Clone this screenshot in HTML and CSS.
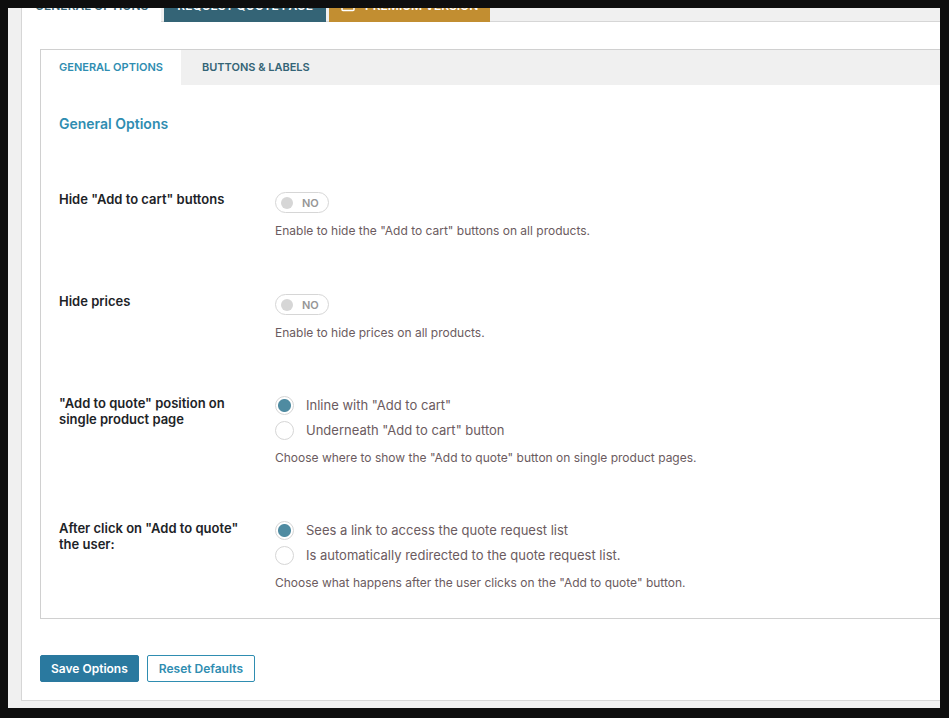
FILE: index.html
```html
<!DOCTYPE html>
<html lang="en">
<head>
    <meta charset="UTF-8">
    <meta name="viewport" content="width=device-width, initial-scale=1.0">
    <title>General Options</title>
    <link rel="stylesheet" href="styles.css">
</head>
<body>

<div class="screen">
    <div class="panel">

        <nav class="main-tabs">
            <a href="#general" class="main-tab active">General Options</a>
            <a href="#request" class="main-tab">Request Quote Page</a>
            <a href="#premium" class="main-tab premium">
                <svg class="tab-icon" width="14" height="12" viewBox="0 0 14 12" fill="none" stroke="#fff" stroke-width="1.5">
                    <path d="M1 1l3.5 3.5L7 1l2.5 3.5L13 1v8.5a1 1 0 0 1-1 1H2a1 1 0 0 1-1-1z"/>
                </svg>
                Premium Version
            </a>
        </nav>

        <form class="panel-content">
            <div class="options-box">
                <nav class="sub-tabs">
                    <a href="#general-options" class="sub-tab active">General Options</a>
                    <a href="#buttons-labels" class="sub-tab">Buttons &amp; Labels</a>
                </nav>

                <div class="options">
                    <h2>General Options</h2>

                    <div class="option-row">
                        <label class="option-label" for="hide-cart">Hide "Add to cart" buttons</label>
                        <div class="option-field">
                            <label class="switch">
                                <input id="hide-cart" type="checkbox">
                                <span>NO</span>
                            </label>
                            <p class="description">Enable to hide the "Add to cart" buttons on all products.</p>
                        </div>
                    </div>

                    <div class="option-row">
                        <label class="option-label" for="hide-prices">Hide prices</label>
                        <div class="option-field">
                            <label class="switch">
                                <input id="hide-prices" type="checkbox">
                                <span>NO</span>
                            </label>
                            <p class="description">Enable to hide prices on all products.</p>
                        </div>
                    </div>

                    <div class="option-row" role="radiogroup" aria-labelledby="position-label">
                        <div class="option-label" id="position-label">"Add to quote" position on single product page</div>
                        <div class="option-field">
                            <label class="radio">
                                <input type="radio" name="position" value="inline" checked>
                                Inline with "Add to cart"
                            </label>
                            <label class="radio">
                                <input type="radio" name="position" value="under">
                                Underneath "Add to cart" button
                            </label>
                            <p class="description radio-description">Choose where to show the "Add to quote" button on single product pages.</p>
                        </div>
                    </div>

                    <div class="option-row" role="radiogroup" aria-labelledby="after-label">
                        <div class="option-label" id="after-label">After click on "Add to quote" the user:</div>
                        <div class="option-field">
                            <label class="radio">
                                <input type="radio" name="after" value="link" checked>
                                Sees a link to access the quote request list
                            </label>
                            <label class="radio">
                                <input type="radio" name="after" value="redirect">
                                Is automatically redirected to the quote request list.
                            </label>
                            <p class="description radio-description">Choose what happens after the user clicks on the "Add to quote" button.</p>
                        </div>
                    </div>
                </div>
            </div>

            <div class="buttons">
                <button type="submit" class="button primary">Save Options</button>
                <button type="reset" class="button">Reset Defaults</button>
            </div>
        </form>

    </div>
</div>

</body>
</html>
```
FILE: styles.css
```css
* {
    box-sizing: border-box;
}

body {
    margin: 0;
    padding: 8px 9px 10px 8px;
    background-color: #0e0e0e;
    font-family: Inter, "Liberation Sans", sans-serif;
    font-size: 13px;
    color: #6b5b60;
}

.screen {
    padding: 0 0 7px 13px;
    background-color: #f0f0f0;
}

.panel {
    border-left: 1px solid #d6d6d6;
    border-bottom: 1px solid #d6d6d6;
    background-color: #fff;
}

/* Top tabs, scrolled partly out of view */
.main-tabs {
    display: flex;
    align-items: flex-end;
    gap: 3px;
    height: 14px;
    overflow: hidden;
    background-color: #f0f0f0;
    box-shadow: inset 0 -1px #d6d6d6;
}

.main-tab {
    display: flex;
    align-items: center;
    gap: 10px;
    padding: 8px 13px;
    background-color: #346476;
    color: #fff;
    font-size: 12px;
    font-weight: 600;
    line-height: 16px;
    text-transform: uppercase;
    text-decoration: none;
    white-space: nowrap;
}

.main-tab.active {
    background-color: #fff;
    color: #346476;
}

.main-tab.premium {
    padding: 8px 12px;
    background-color: #c28e31;
}

.panel-content {
    padding: 27px 0 18px 18px;
}

.options-box {
    border: 1px solid #d0d0d0;
    border-right: none;
}

.sub-tabs {
    display: flex;
    background-color: #f0f0f0;
}

.sub-tab {
    padding: 9px 21px 10px;
    color: #346476;
    font-size: 11px;
    font-weight: 600;
    line-height: 16px;
    text-transform: uppercase;
    text-decoration: none;
}

.sub-tab.active {
    padding: 9px 18px 10px;
    background-color: #fff;
    color: #2f8db1;
}

.options {
    padding: 29px 18px 26px;
}

h2 {
    margin: 0 0 55px;
    color: #2f8db1;
    font-size: 14px;
    font-weight: 600;
    line-height: 20px;
}

.option-row {
    display: grid;
    grid-template-columns: 180px 1fr;
    column-gap: 36px;
    align-items: start;
}

.option-row + .option-row {
    margin-top: 51px;
}

.option-label {
    padding-top: 2px;
    color: #1d2327;
    font-weight: 600;
    line-height: 16px;
}

.switch {
    display: flex;
    align-items: center;
    gap: 9px;
    width: 54px;
    height: 21px;
    margin-top: 3px;
    padding-left: 5px;
    border: 1px solid #d6d6d6;
    border-radius: 11px;
    color: #969696;
    font-size: 11px;
    font-weight: 600;
    cursor: pointer;
}

.switch input {
    appearance: none;
    width: 12px;
    height: 12px;
    margin: 0;
    border-radius: 50%;
    background-color: #d6d6d6;
}

.switch input:checked {
    background-color: #4f8ba1;
}

.description {
    margin: 9px 0 0;
    font-size: 12px;
    line-height: 18px;
}

.radio-description {
    margin-top: 6px;
}

.radio {
    display: flex;
    align-items: center;
    gap: 12px;
    line-height: 25px;
}

.radio input {
    appearance: none;
    flex: none;
    width: 19px;
    height: 19px;
    margin: 0;
    border: 1px solid #d6d6d6;
    border-radius: 50%;
    background-color: #fff;
}

.radio input:checked {
    background-image: radial-gradient(circle, #4f8ba1 6px, transparent 7px);
}

.buttons {
    display: flex;
    gap: 8px;
    margin-top: 36px;
}

.button {
    height: 27px;
    padding: 0 11px;
    border: 1px solid #2f8db1;
    border-radius: 2px;
    background-color: #fff;
    color: #2f8db1;
    font-family: inherit;
    font-size: 12px;
    font-weight: 600;
    cursor: pointer;
}

.button.primary {
    padding: 0 10px;
    border-color: #2a799f;
    background-color: #2a799f;
    color: #fff;
}
```
